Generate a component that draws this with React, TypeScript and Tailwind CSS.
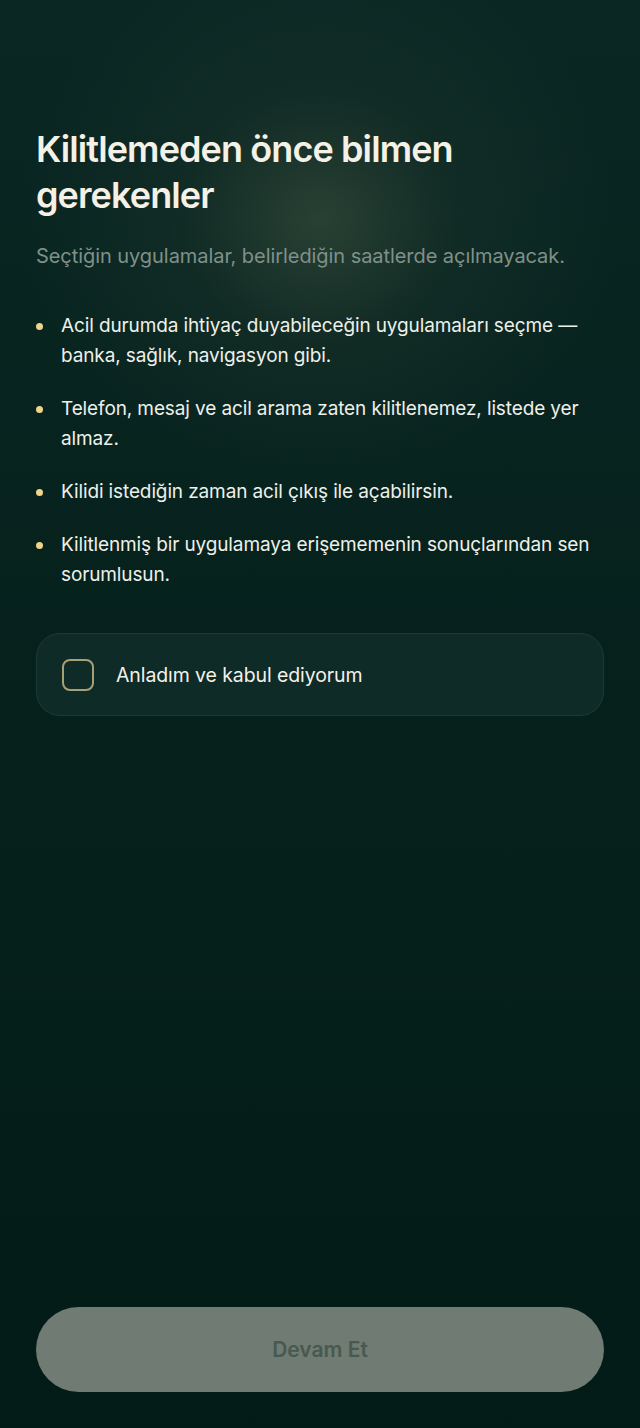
import { useState } from "react";

const items = [
  "Acil durumda ihtiyaç duyabileceğin uygulamaları seçme — banka, sağlık, navigasyon gibi.",
  "Telefon, mesaj ve acil arama zaten kilitlenemez, listede yer almaz.",
  "Kilidi istediğin zaman acil çıkış ile açabilirsin.",
  "Kilitlenmiş bir uygulamaya erişememenin sonuçlarından sen sorumlusun.",
];

export default function App() {
  const [agreed, setAgreed] = useState(false);

  return (
    <div
      className="relative min-h-[1428px] w-full overflow-hidden bg-[linear-gradient(180deg,#0a2723_0%,#06211c_50%,#031b17_100%)] text-[#f3f1ea]"
      style={{ fontFamily: "Inter, 'Noto Sans', sans-serif" }}
    >
      {/* soft glow behind the heading */}
      <div className="pointer-events-none absolute left-[20px] top-[-60px] h-[560px] w-[600px] rounded-full bg-[radial-gradient(closest-side,rgba(62,82,64,0.6),rgba(36,58,48,0.3)_45%,transparent)]" />

      <div className="relative flex min-h-[1428px] flex-col px-9">
        <h1 className="mt-[126px] text-[36px] font-semibold leading-[46px] tracking-[-0.025em] text-[#f4f1e6]">
          Kilitlemeden önce bilmen gerekenler
        </h1>
        <p className="mt-[23px] text-[20px] leading-[30px] tracking-[-0.06px] text-[#7f918a]">
          Seçtiğin uygulamalar, belirlediğin saatlerde açılmayacak.
        </p>

        <ul className="mt-[40px] flex flex-col gap-[23px]">
          {items.map((t) => (
            <li key={t} className="flex gap-[18px]">
              <span className="mt-[12px] h-[7px] w-[7px] shrink-0 rounded-full bg-[#f0d48a]" />
              <span className="text-[19px] leading-[30px] tracking-[-0.12px] text-[#eef0ea]">{t}</span>
            </li>
          ))}
        </ul>

        <button
          type="button"
          onClick={() => setAgreed(!agreed)}
          className="mt-[43px] flex h-[83px] w-full items-center gap-[22px] rounded-[24px] border border-[#1f3a34] bg-[#0f2b27] px-[25px] text-left"
        >
          <span
            className={`flex h-[32px] w-[32px] items-center justify-center rounded-[8px] border-2 border-[#a99f74] ${agreed ? "bg-[#a99f74]" : ""}`}
          >
            {agreed && (
              <svg viewBox="0 0 24 24" className="h-5 w-5" fill="none" stroke="#0a2723" strokeWidth="3">
                <path d="M5 12l5 5L19 7" />
              </svg>
            )}
          </span>
          <span className="mt-[3px] text-[19.5px] font-normal tracking-[-0.1px] text-[#f3f1ea]">Anladım ve kabul ediyorum</span>
        </button>

        <div className="flex-1" />

        <button
          type="button"
          disabled={!agreed}
          className="mb-[36px] flex h-[85px] w-full items-center justify-center rounded-full bg-[#6f7b73] text-[21px] font-semibold text-[#48594f]"
        >
          Devam Et
        </button>
      </div>
    </div>
  );
}
